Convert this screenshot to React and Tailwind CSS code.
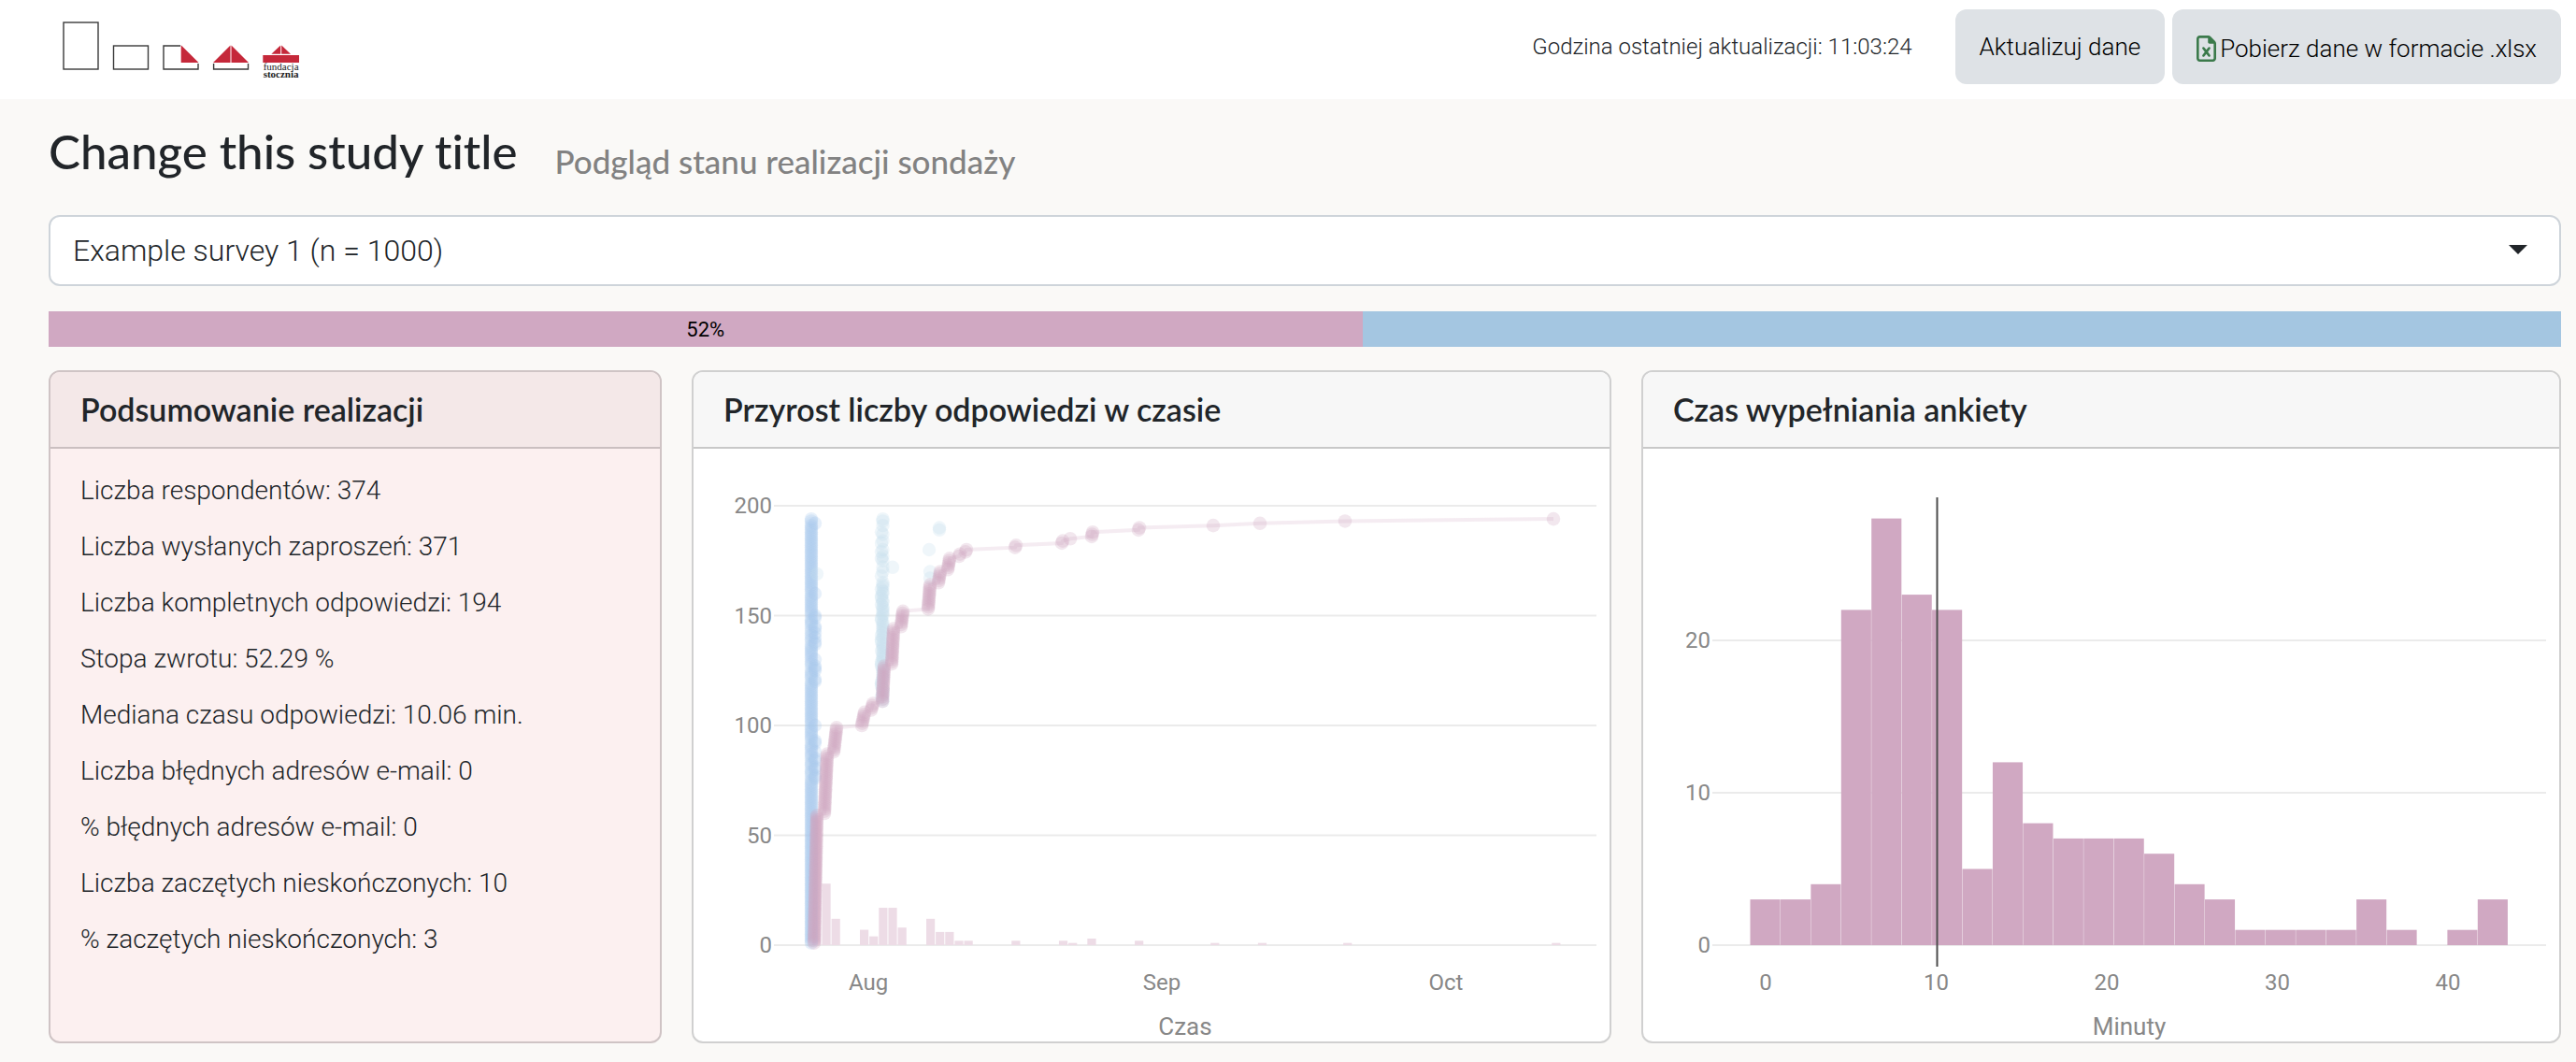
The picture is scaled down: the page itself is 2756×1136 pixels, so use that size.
import React from "react";
import { FaRegFileExcel } from "react-icons/fa6";

const PINK = "#d0a8c2";

const summary = [
  "Liczba respondentów: 374",
  "Liczba wysłanych zaproszeń: 371",
  "Liczba kompletnych odpowiedzi: 194",
  "Stopa zwrotu: 52.29 %",
  "Mediana czasu odpowiedzi: 10.06 min.",
  "Liczba błędnych adresów e-mail: 0",
  "% błędnych adresów e-mail: 0",
  "Liczba zaczętych nieskończonych: 10",
  "% zaczętych nieskończonych: 3",
];

function range(from, to) {
  return Array.from({ length: to - from + 1 }, (_, i) => from + i);
}

/* ---------- responses over time ---------- */

// [day index, responses that day]
const daily = [
  [0, 59], [1, 28], [2, 12], [5, 7], [6, 4], [7, 17], [8, 17], [9, 8],
  [12, 12], [13, 6], [14, 6], [15, 2], [16, 2], [21, 2], [26, 2], [27, 1],
  [29, 3], [34, 2], [42, 1], [47, 1], [56, 1], [78, 1],
];

// [first count, last count, x of first, x of last]
const growth = [
  [1, 59, 129, 132], [60, 87, 140, 143], [88, 99, 150, 153], [100, 106, 180, 183],
  [107, 110, 190, 192], [111, 127, 202, 204], [128, 144, 212, 214], [145, 152, 222, 224],
  [153, 164, 251, 253], [165, 170, 262, 264], [171, 176, 272, 274], [177, 178, 284, 285],
  [179, 180, 291, 292], [181, 182, 344, 345], [183, 184, 394, 395], [185, 185, 403, 403],
  [186, 188, 426, 427], [189, 190, 476, 477], [191, 191, 556, 556], [192, 192, 606, 606],
  [193, 193, 697, 697], [194, 194, 920, 920],
];

const growthPoints = growth.flatMap(([a, b, x1, x2]) =>
  range(a, b).map((v) => [x1 + ((x2 - x1) * (v - a)) / Math.max(1, b - a), v])
);

const lateInvites = [
  192, 160, 150, 149, 145, 144, 142, 140, 138, 137, 130, 127, 126, 125, 121, 120,
  100, 93, 92, 88, 85, 84, 81, 80, 77, 76,
];
const invites = [...range(1, 194).filter((v) => !lateInvites.includes(v)), 194];
const reminders = [
  194, 193, 191, 188, 187, 184, 183, 180, 179, 177, 176, 175, 172, 170, 168,
  ...range(111, 165),
];
const strays = [[213, 172], [252, 180], [253, 170], [253, 167], [263, 190], [263, 189], [132, 169]];

function GrowthChart() {
  const y = (v) => 531 - v * 2.35;
  return (
    <svg viewBox="0 0 980 634" className="block h-auto w-full" role="img" aria-label="Przyrost liczby odpowiedzi w czasie">
      {[0, 50, 100, 150, 200].map((v) => (
        <g key={v}>
          <line x1="86" x2="966" y1={y(v)} y2={y(v)} stroke="#ebebeb" strokeWidth="2" />
          <text x="84" y={y(v) + 8} textAnchor="end" fontSize="24" fill="#888888">{v}</text>
        </g>
      ))}
      {daily.map(([d, n]) => (
        <rect key={d} x={127.3 + d * 10.14} y={y(n)} width="9.2" height={n * 2.35} fill="#eddce6" />
      ))}
      <g fill="#a6c7ec" fillOpacity="0.27">
        {range(1, 194).map((v) => <circle key={v} cx="126" cy={y(v)} r="7.2" fillOpacity={invites.includes(v) ? 0.27 : 0.14} />)}
        {lateInvites.map((v) => <circle key={v} cx="130" cy={y(v)} r="7.2" />)}
      </g>
      <g fill="#c5deee" fillOpacity="0.28">
        {reminders.map((v) => <circle key={v} cx={v % 10 > 7 || v % 7 === 1 ? 201 : 202.5} cy={y(v)} r="7.2" />)}
        {strays.map(([x, v]) => <circle key={`${x}-${v}`} cx={x} cy={y(v)} r="7.2" />)}
      </g>
      <polyline
        points={growthPoints.map(([x, v]) => `${x},${y(v)}`).join(" ")}
        fill="none" stroke={PINK} strokeOpacity="0.22" strokeWidth="4"
      />
      <g fill={PINK} fillOpacity="0.27">
        {growthPoints.map(([x, v]) => <circle key={v} cx={x} cy={y(v)} r="7.3" />)}
      </g>
      <g fontSize="24" fill="#888888" textAnchor="middle">
        <text x="187" y="579">Aug</text>
        <text x="501" y="579">Sep</text>
        <text x="805" y="579">Oct</text>
        <text x="526" y="627" fontSize="26">Czas</text>
      </g>
    </svg>
  );
}

/* ---------- completion time histogram ---------- */

const bins = [3, 3, 4, 22, 28, 23, 22, 5, 12, 8, 7, 7, 7, 6, 4, 3, 1, 1, 1, 1, 3, 1, 0, 1, 3];

function TimeChart() {
  const y = (v) => 531 - v * 16.3;
  return (
    <svg viewBox="0 0 980 634" className="block h-auto w-full" role="img" aria-label="Czas wypełniania ankiety">
      {[0, 10, 20].map((v) => (
        <g key={v}>
          <line x1="74" x2="966" y1={y(v)} y2={y(v)} stroke="#ebebeb" strokeWidth="2" />
          <text x="72" y={y(v) + 8} textAnchor="end" fontSize="24" fill="#888888">{v}</text>
        </g>
      ))}
      {bins.map((n, i) => (
        <rect key={i} x={114.5 + i * 32.43} y={y(n)} width="32.1" height={n * 16.3} fill={PINK} />
      ))}
      <line x1="314.5" x2="314.5" y1="52" y2="554" stroke="#4d4d4d" strokeWidth="2" />
      <g fontSize="24" fill="#888888" textAnchor="middle">
        {[0, 10, 20, 30, 40].map((v) => (
          <text key={v} x={131 + v * 18.25} y="579">{v}</text>
        ))}
        <text x="520" y="627" fontSize="26">Minuty</text>
      </g>
    </svg>
  );
}

/* ---------- page pieces ---------- */

function Logo() {
  return (
    <svg viewBox="0 0 256 66" className="h-[66px] w-64" role="img" aria-label="Fundacja Stocznia">
      <g fill="none" stroke="#3a3a3a" strokeWidth="1.4">
        <rect x="2" y="2" width="37" height="50" />
        <rect x="55.5" y="27" width="37" height="25" />
        <path d="M127 27H109V52H146V46" />
        <path d="M162.600 46V52H199.500V46" />
      </g>
      <g fill="#c5283a">
        <path d="M127.700 26.300V45H146.500Z" />
        <path d="M180.500 26.500V45H162Z" />
        <path d="M181.500 26.500V45H200Z" />
        <path d="M234.200 26.500V35.700H224.300Z" />
        <path d="M235.200 26.500V35.700H245Z" />
        <rect x="215.300" y="37" width="38.700" height="8" />
      </g>
      <g fontFamily="Liberation Serif, serif" fontSize="11" textAnchor="middle" fill="#222">
        <text x="234.600" y="53">fundacja</text>
        <text x="234.600" y="61" fontWeight="700">stocznia</text>
      </g>
    </svg>
  );
}

function Card({ title, tinted, children }) {
  return (
    <section
      className={
        "min-w-0 overflow-hidden rounded-xl border-2 " +
        (tinted ? "border-[#cfc4c5] bg-[#fcf0f0]" : "border-[#d0d0d0] bg-white")
      }
    >
      <h2
        className={
          "border-b-2 px-8 py-5 font-[Lato,sans-serif] text-[34px] leading-10 font-semibold " +
          (tinted ? "border-[#cabfc0] bg-[#f4e8e8]" : "border-[#c8c8c8] bg-[#f7f7f7]")
        }
      >
        {title}
      </h2>
      {children}
    </section>
  );
}

export default function App() {
  return (
    <div className="min-h-screen bg-[#faf9f7] font-[Roboto,sans-serif] text-[#212529]">
      <header className="flex items-start justify-between bg-white pt-[10px] pr-4 pb-4 pl-[66px]">
        <div className="pt-3">
          <Logo />
        </div>
        <div className="flex items-center gap-2">
          <p className="pr-[38px] text-2xl font-light">Godzina ostatniej aktualizacji: 11:03:24</p>
          <button type="button" className="h-20 rounded-xl bg-[#dee2e6] px-[26px] text-[26px] font-light text-black">
            Aktualizuj dane
          </button>
          <button type="button" className="flex h-20 items-center gap-1 rounded-xl bg-[#dee2e6] px-[26px] pt-1 text-[26px] font-light text-black">
            <FaRegFileExcel className="h-7 w-[21px] text-[#3b7a4b]" />
            Pobierz dane w formacie .xlsx
          </button>
        </div>
      </header>

      <main className="pt-7 pr-4 pb-5 pl-[52px]">
        <div className="flex items-end gap-10 font-[Lato,sans-serif] font-medium [font-variant-ligatures:none]">
          <h1 className="text-[51px] leading-[56px]">Change this study title</h1>
          <p className="text-[35px] leading-9 text-[#828282]">Podgląd stanu realizacji sondaży</p>
        </div>

        <div className="relative mt-10">
          <select
            aria-label="Ankieta"
            className="block h-[76px] w-full appearance-none rounded-xl border-2 border-[#ced4da] bg-white px-6 text-[32px] font-light text-[#212529]"
          >
            <option>Example survey 1 (n = 1000)</option>
          </select>
          <svg viewBox="0 0 20 10" className="pointer-events-none absolute top-8 right-9 h-[10px] w-5" aria-hidden="true">
            <path d="M0 0H20L10 10Z" fill="#212529" />
          </svg>
        </div>

        <div className="mt-[27px] flex h-[38px] bg-[#a4c6e1]" role="progressbar" aria-valuenow={52} aria-valuemin={0} aria-valuemax={100} aria-label="Stopa zwrotu">
          <div className="flex items-center justify-center bg-[#d0a8c2] text-[22px] text-black" style={{ width: "52.29%" }}>
            52%
          </div>
        </div>

        <div className="mt-[25px] grid grid-cols-[2fr_3fr_3fr] gap-8">
          <Card title="Podsumowanie realizacji" tinted>
            <ul className="flex flex-col gap-[18px] px-8 pt-6 text-[28px] leading-[42px] font-light">
              {summary.map((line) => (
                <li key={line}>{line}</li>
              ))}
            </ul>
          </Card>
          <Card title="Przyrost liczby odpowiedzi w czasie">
            <GrowthChart />
          </Card>
          <Card title="Czas wypełniania ankiety">
            <TimeChart />
          </Card>
        </div>
      </main>
    </div>
  );
}
